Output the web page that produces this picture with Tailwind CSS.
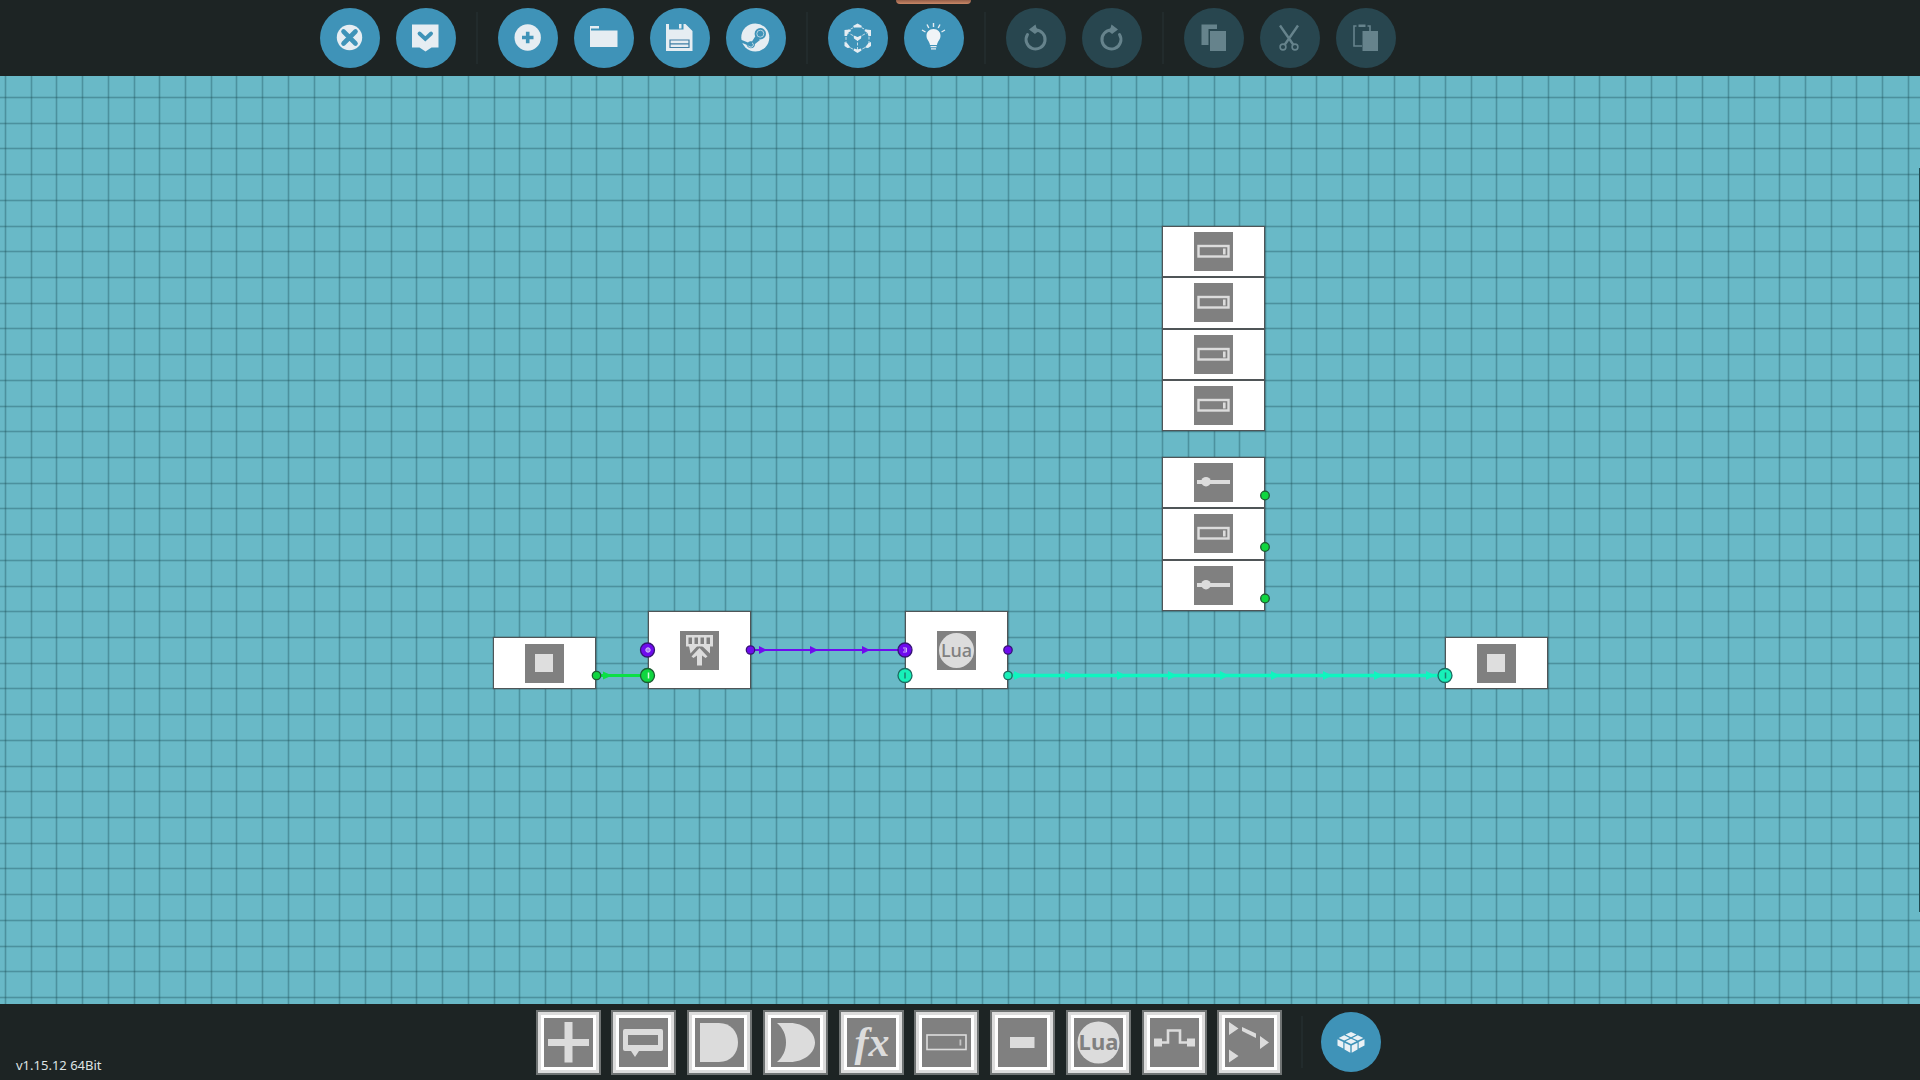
<!DOCTYPE html>
<html lang="en">
<head>
  <meta charset="UTF-8">
  <meta name="viewport" content="width=device-width, initial-scale=1.0">
  <title>Microcontroller Editor</title>
  <script src="https://cdn.jsdelivr.net/npm/@tailwindcss/browser@4"></script>
</head>
<body class="flex flex-col h-screen overflow-hidden bg-[#1d2424] font-['Noto_Sans','Open_Sans',sans-serif]">

  <!-- Shared node icons -->
  <svg class="hidden">
    <symbol id="icon-input" viewBox="0 0 39 39">
      <rect x="4.5" y="14" width="30" height="10.5" fill="none" stroke="#dcdcdc" stroke-width="2.4"/>
      <rect x="29" y="16.5" width="2.6" height="6" fill="#dcdcdc"/>
    </symbol>
    <symbol id="icon-slider" viewBox="0 0 39 39">
      <rect x="3" y="17" width="33" height="4" fill="#dcdcdc"/>
      <circle cx="12" cy="18.7" r="4.8" fill="#dcdcdc"/>
    </symbol>
    <symbol id="icon-square" viewBox="0 0 39 39">
      <rect x="10" y="10" width="18" height="18" fill="#dedede"/>
    </symbol>
  </svg>

  <!-- Top toolbar -->
  <header class="relative flex items-center h-[76px] shrink-0 pl-80">
    <div class="flex gap-4">
      <button aria-label="Close" class="size-[60px] rounded-full bg-[#3f93b8] hover:bg-[#4ba3c9]">
        <svg viewBox="0 0 60 60">
          <circle cx="29.5" cy="29.5" r="12.7" fill="#e6edf2"/>
          <path d="M23.5 23.5l12 12M35.5 23.5l-12 12" stroke="#3f93b8" stroke-width="4.6" stroke-linecap="round"/>
        </svg>
      </button>
      <button aria-label="Confirm" class="size-[60px] rounded-full bg-[#3f93b8] hover:bg-[#4ba3c9]">
        <svg viewBox="0 0 60 60">
          <path d="M16 16.5h26.5v23h-7l-6 4-6-4H16z" fill="#e6edf2"/>
          <path d="M23.5 25.5l5.800 5.5 5.800-5.5" fill="none" stroke="#3f93b8" stroke-width="3.8" stroke-linecap="round"/>
        </svg>
      </button>
    </div>
    <div class="w-0.5 h-13 mx-5 bg-[#222b2c]"></div>
    <div class="flex gap-4">
      <button aria-label="New" class="size-[60px] rounded-full bg-[#3f93b8] hover:bg-[#4ba3c9]">
        <svg viewBox="0 0 60 60">
          <circle cx="29.7" cy="29.5" r="13.2" fill="#e6edf2"/>
          <path d="M24 29.5h11.5M29.7 23.7v11.5" stroke="#3f93b8" stroke-width="3.6"/>
        </svg>
      </button>
      <button aria-label="Open" class="size-[60px] rounded-full bg-[#3f93b8] hover:bg-[#4ba3c9]">
        <svg viewBox="0 0 60 60">
          <path d="M16 18h9v2.500h-8V22.500h26.500V39H16z" fill="#e6edf2"/>
        </svg>
      </button>
      <button aria-label="Save" class="size-[60px] rounded-full bg-[#3f93b8] hover:bg-[#4ba3c9]">
        <svg viewBox="0 0 60 60">
          <path d="M16 16h3v5.500h14.500V16h2l7 7V43H16z" fill="#e6edf2"/>
          <path d="M29 16h2.500v4.500H29z" fill="#e6edf2"/>
          <path d="M20 32h19v7.500H20zM20.500 35.800h18" fill="none" stroke="#3f7fa5" stroke-width="1.2"/>
        </svg>
      </button>
      <button aria-label="Steam Workshop" class="size-[60px] rounded-full bg-[#3f93b8] hover:bg-[#4ba3c9]">
        <svg viewBox="0 0 60 60">
          <circle cx="29.3" cy="29.5" r="14" fill="#e6edf2"/>
          <path d="M14.500 31.500l7.500 3c1.800-1.300 3-1.300 4-1l3.500-5.500 4.500 4-5 4c0 3-2 4.300-4.300 4.200-2.400-.2-3.700-1.700-4.200-3.500L14 34z" fill="#3f93b8"/>
          <circle cx="34.3" cy="25.7" r="5.7" fill="#3f93b8"/>
          <circle cx="34.3" cy="25.7" r="3.5" fill="none" stroke="#b5d3e2" stroke-width="1"/>
          <path d="M22 37.5c1 1.700 3 2.200 4.500 1 1.300-1.200 1-3-.5-3.700" fill="none" stroke="#d5e5ee" stroke-width="1"/>
        </svg>
      </button>
    </div>
    <div class="w-0.5 h-13 mx-5 bg-[#222b2c]"></div>
    <div class="flex gap-4">
      <button aria-label="Toggle 3D view" class="size-[60px] rounded-full bg-[#3f93b8] hover:bg-[#4ba3c9]">
        <svg viewBox="0 0 60 60">
          <path d="M29.500 17.500L41 23.500v14l-11.500 6-11.500-6v-14zM18.500 24l11 6 11-6M29.500 30v13" fill="none" stroke="#e6edf2" stroke-width="0.8" stroke-dasharray="3 1.500"/>
          <g fill="#e6edf2">
            <path d="M29.500 15.500l4.500 2.500-1 1.500h-7l-1-1.500z"/>
            <path d="M25.500 27.500l4 1.500 4-1.500-.5 3-3.500 2.500-3.500-2.500z"/>
            <path d="M26 40.500l3.500 1 3.500-1 .5 2-4 2.500-4-2.500z"/>
            <path d="M16.500 28v-6l5.500-.5 1.200 1.500-3 1.500-1.200 3.500z"/>
            <path d="M43 28v-6l-5.500-.5-1.200 1.500 3 1.500 1.200 3.500z"/>
            <path d="M16.500 34l2.500 1 3.500 4.500-3 .5-3-2z"/>
            <path d="M43 34l-2.500 1-3.500 4.500 3 .5 3-2z"/>
          </g>
        </svg>
      </button>
      <button aria-label="Simulate logic" aria-pressed="true" class="relative size-[60px] rounded-full bg-[#3f93b8] hover:bg-[#4ba3c9]">
        <span class="absolute -top-2 -left-2 w-[75px] h-1 rounded-b-sm bg-linear-to-b from-[#96604a] to-[#c98867]"></span>
        <svg viewBox="0 0 60 60">
          <path d="M29.500 21c4.300 0 7 3 7 6.700 0 4-3.200 5.800-3.500 9.300h-7c-.3-3.500-3.500-5.300-3.500-9.300 0-3.700 2.700-6.700 7-6.700z" fill="#f0f4f7"/>
          <path d="M26.500 38.700h6M27 40.800h5" stroke="#e6edf2" stroke-width="1.300"/>
          <path d="M29.500 15v4M23 16.500l1.800 3.500M36 16.500l-1.800 3.500M18 22l3.500 2M41 22l-3.500 2" stroke="#e6edf2" stroke-width="1.400"/>
        </svg>
      </button>
    </div>
    <div class="w-0.5 h-13 mx-5 bg-[#222b2c]"></div>
    <div class="flex gap-4">
      <button aria-label="Undo" disabled class="size-[60px] rounded-full bg-[#28464f]">
        <svg viewBox="0 0 60 60">
          <path d="M21.500 26.500a9.500 9.500 0 1 0 8-4.500" fill="none" stroke="#66838c" stroke-width="3" stroke-linecap="round"/>
          <path d="M23 21.500l6.500-5 1 3.500 3 3-3.500 2-1 1z" fill="#66838c"/>
        </svg>
      </button>
      <button aria-label="Redo" disabled class="size-[60px] rounded-full bg-[#28464f]">
        <svg viewBox="0 0 60 60">
          <path d="M37.500 26.500a9.500 9.500 0 1 1-8-4.500" fill="none" stroke="#66838c" stroke-width="3" stroke-linecap="round"/>
          <path d="M36 21.500l-6.500-5-1 3.500-3 3 3.500 2 1 1z" fill="#66838c"/>
        </svg>
      </button>
    </div>
    <div class="w-0.5 h-13 mx-5 bg-[#222b2c]"></div>
    <div class="flex gap-4">
      <button aria-label="Copy" disabled class="size-[60px] rounded-full bg-[#28464f]">
        <svg viewBox="0 0 60 60" fill="#66838c">
          <path d="M17.500 16.500h15.500v4.500h-8.500v16h-7z"/>
          <path d="M26 23h16v20H26z"/>
        </svg>
      </button>
      <button aria-label="Cut" disabled class="size-[60px] rounded-full bg-[#28464f]">
        <svg viewBox="0 0 60 60" fill="none" stroke="#66838c">
          <path d="M20 17.500L33.500 37M38 17.500L24.500 37" stroke-width="2.400"/>
          <circle cx="23" cy="39" r="2.900" stroke-width="1.600"/>
          <circle cx="35" cy="39" r="2.900" stroke-width="1.600"/>
        </svg>
      </button>
      <button aria-label="Paste" disabled class="size-[60px] rounded-full bg-[#28464f]">
        <svg viewBox="0 0 60 60">
          <path d="M20.500 18H18v20h8M31.500 18H34v5" fill="none" stroke="#66838c" stroke-width="1.600"/>
          <path d="M22.500 16.500h7V19h-7z" fill="#66838c"/>
          <path d="M26.500 23h15.500v20H26.500z" fill="#66838c"/>
        </svg>
      </button>
    </div>
  </header>

  <!-- Logic canvas -->
  <main class="relative grow overflow-hidden bg-[#69b9c7]">
    <!-- 7 cells per 180px tile -->
    <svg class="absolute inset-0 size-full">
      <defs>
        <pattern id="grid" x="4" y="20" width="180" height="180" patternUnits="userSpaceOnUse">
          <g stroke="#17464f" stroke-opacity="0.11" stroke-width="3">
            <path d="M1.500 0v180M27.500 0v180M52.500 0v180M78.500 0v180M104.500 0v180M130.500 0v180M155.500 0v180"/>
            <path d="M0 1.500h180M0 27.500h180M0 52.500h180M0 78.500h180M0 104.500h180M0 130.500h180M0 155.500h180"/>
          </g>
          <g stroke="#17464f" stroke-opacity="0.27">
            <path d="M1.500 0v180M27.500 0v180M52.500 0v180M78.500 0v180M104.500 0v180M130.500 0v180M155.500 0v180"/>
            <path d="M0 1.500h180M0 27.500h180M0 52.500h180M0 78.500h180M0 104.500h180M0 130.500h180M0 155.500h180"/>
          </g>
        </pattern>
      </defs>
      <rect width="100%" height="100%" fill="url(#grid)"/>
    </svg>

    <!-- Nodes -->
    <div class="absolute left-[493px] top-[561px] w-[103px] h-[52px] flex items-center justify-center bg-white border border-[#4f5557] shadow-[0_0_1px_#444]">
      <svg class="size-[39px] bg-[#808080]"><use href="#icon-square"/></svg>
    </div>
    <div class="absolute left-[648px] top-[535px] w-[103px] h-[78px] flex items-center justify-center bg-white border border-[#4f5557] shadow-[0_0_1px_#444]">
      <svg class="size-[39px] bg-[#808080]" viewBox="0 0 39 39" fill="#dcdcdc">
        <path fill-rule="evenodd" d="M6 4h27v11.500H6zM8.500 6.500v6.500h3.500V6.500zM14.500 6.500v6.500h3.500V6.500zM20.500 6.500v6.500h3.500V6.500zM26.500 6.500v6.500h3.500V6.500z"/>
        <path d="M9 15h21v7.500L19.500 12.500 10.500 22.500z"/>
        <path d="M19.500 15.500l9 9.500h-18z" fill="#808080"/>
        <path d="M19.500 17l8 8.500-2 1.500-3.500-2.500v10h-5V24.500l-3.500 2.500-2-1.500z"/>
      </svg>
    </div>
    <div class="absolute left-[905px] top-[535px] w-[103px] h-[78px] flex items-center justify-center bg-white border border-[#4f5557] shadow-[0_0_1px_#444]">
      <svg class="size-[39px] bg-[#808080]" viewBox="0 0 39 39">
        <circle cx="19.500" cy="19.500" r="17.500" fill="#dcdcdc"/>
        <text x="19.500" y="26" text-anchor="middle" font-size="18" font-weight="500" fill="#808080">Lua</text>
      </svg>
    </div>
    <div class="absolute left-[1445px] top-[561px] w-[103px] h-[52px] flex items-center justify-center bg-white border border-[#4f5557] shadow-[0_0_1px_#444]">
      <svg class="size-[39px] bg-[#808080]"><use href="#icon-square"/></svg>
    </div>

    <div class="absolute left-[1162px] top-[150px] w-[103px] h-[205px] flex flex-col shadow-[0_0_1px_#444]">
      <div class="flex-1 flex items-center justify-center bg-white border border-[#4f5557]">
        <svg class="size-[39px] bg-[#808080]"><use href="#icon-input"/></svg>
      </div>
      <div class="flex-1 flex items-center justify-center bg-white border border-[#4f5557]">
        <svg class="size-[39px] bg-[#808080]"><use href="#icon-input"/></svg>
      </div>
      <div class="flex-1 flex items-center justify-center bg-white border border-[#4f5557]">
        <svg class="size-[39px] bg-[#808080]"><use href="#icon-input"/></svg>
      </div>
      <div class="flex-1 flex items-center justify-center bg-white border border-[#4f5557]">
        <svg class="size-[39px] bg-[#808080]"><use href="#icon-input"/></svg>
      </div>
    </div>

    <div class="absolute left-[1162px] top-[381px] w-[103px] h-[154px] flex flex-col shadow-[0_0_1px_#444]">
      <div class="flex-1 flex items-center justify-center bg-white border border-[#4f5557]">
        <svg class="size-[39px] bg-[#808080]"><use href="#icon-slider"/></svg>
      </div>
      <div class="flex-1 flex items-center justify-center bg-white border border-[#4f5557]">
        <svg class="size-[39px] bg-[#808080]"><use href="#icon-input"/></svg>
      </div>
      <div class="flex-1 flex items-center justify-center bg-white border border-[#4f5557]">
        <svg class="size-[39px] bg-[#808080]"><use href="#icon-slider"/></svg>
      </div>
    </div>

    <!-- Wires and ports -->
    <svg class="absolute inset-0 size-full pointer-events-none">
      <path d="M597 599.500H648" stroke="#0be045" stroke-width="3"/>
      <path d="M603 595.500l9 4-9 4z" fill="#0be045"/>
      <path d="M751 574H905" stroke="#6f0bee" stroke-width="2"/>
      <path d="M759 570l8 4-8 4zM810 570l8 4-8 4zM862 570l8 4-8 4z" fill="#6f0bee"/>
      <path d="M1008 599.500H1445" stroke="#0ff5bf" stroke-width="3.600"/>
      <path d="M1014 595l9 4.500-9 4.500zM1065 595l9 4.500-9 4.500zM1117 595l9 4.500-9 4.500zM1168 595l9 4.500-9 4.500zM1220 595l9 4.500-9 4.500zM1271 595l9 4.500-9 4.500zM1323 595l9 4.500-9 4.500zM1374 595l9 4.500-9 4.500zM1426 595l9 4.500-9 4.500z" fill="#0ff5bf"/>

      <g fill="#0fd640" stroke="#1c5c31" stroke-width="1.300">
        <circle cx="596.500" cy="599.500" r="4.200"/>
        <circle cx="647.500" cy="599.500" r="7"/>
        <circle cx="1265" cy="419.500" r="4.300"/>
        <circle cx="1265" cy="471" r="4.300"/>
        <circle cx="1265" cy="522.500" r="4.300"/>
      </g>
      <g fill="#6f0bee" stroke="#351575" stroke-width="1.300">
        <circle cx="647.500" cy="574" r="7"/>
        <circle cx="750.500" cy="574" r="4.200"/>
        <circle cx="905" cy="574" r="7"/>
        <circle cx="1008" cy="574" r="4.200"/>
      </g>
      <g fill="#17f0b8" stroke="#1c6b60" stroke-width="1.300">
        <circle cx="905" cy="599.500" r="7"/>
        <circle cx="1008" cy="599.500" r="4.200"/>
        <circle cx="1445" cy="599.500" r="7"/>
      </g>
      <circle cx="648" cy="574" r="2.200" fill="#a57af2" stroke="#d5c4fa"/>
      <path d="M648.500 596.500v6" stroke="#d5fbdf" stroke-width="1.500"/>
      <path d="M903 572h3.500v4H903M904 574h2.500" fill="none" stroke="#cdb5f8"/>
      <path d="M905 596.500v6M1445.500 596.500v6" stroke="#1c8070" stroke-width="1.500"/>
    </svg>

    <!-- Side panel edge -->
    <div class="absolute right-0 top-[92px] bottom-[92px] w-px bg-[#1f4a50]"></div>
  </main>

  <!-- Component bar -->
  <footer class="relative flex items-center justify-center h-[76px] shrink-0 pr-1">
    <p class="absolute left-4 bottom-[7px] text-[13px] leading-4 text-[#dfe3e3]">v1.15.12 64Bit</p>

    <div class="flex justify-between w-[747px]">
      <button aria-label="All components" class="p-1.5 bg-white border-2 border-[#6f7373] ring-3 ring-[#dcdcdc] ring-inset">
        <svg class="size-[49px] bg-[#808080]" viewBox="0 0 49 49">
          <path d="M20.500 4h8v17h16.500v7H28.500v16.500h-8V28H4V21h16.500z" fill="#dcdcdc"/>
        </svg>
      </button>
      <button aria-label="Comment" class="p-1.5 bg-white border-2 border-[#6f7373] ring-3 ring-[#dcdcdc] ring-inset">
        <svg class="size-[49px] bg-[#808080]" viewBox="0 0 49 49">
          <path fill-rule="evenodd" d="M6 11h36a2 2 0 0 1 2 2v18a2 2 0 0 1-2 2H20l-4 6-4-6H6a2 2 0 0 1-2-2V13a2 2 0 0 1 2-2zM9 17v10h30V17z" fill="#dcdcdc"/>
        </svg>
      </button>
      <button aria-label="AND gate" class="p-1.5 bg-white border-2 border-[#6f7373] ring-3 ring-[#dcdcdc] ring-inset">
        <svg class="size-[49px] bg-[#808080]" viewBox="0 0 49 49">
          <path d="M5 5h19c12 0 19 9 19 19.500S36 44 24 44H5z" fill="#dcdcdc"/>
        </svg>
      </button>
      <button aria-label="OR gate" class="p-1.5 bg-white border-2 border-[#6f7373] ring-3 ring-[#dcdcdc] ring-inset">
        <svg class="size-[49px] bg-[#808080]" viewBox="0 0 49 49">
          <path d="M6 5h13c14 0 25 9 25 19.500S33 44 19 44H6c6-5 9-12 9-19.500S12 10 6 5z" fill="#dcdcdc"/>
        </svg>
      </button>
      <button aria-label="Function" class="p-1.5 bg-white border-2 border-[#6f7373] ring-3 ring-[#dcdcdc] ring-inset">
        <svg class="size-[49px] bg-[#808080]" viewBox="0 0 49 49">
          <text x="25" y="38" text-anchor="middle" class="font-['Liberation_Serif',serif]" font-size="42" font-style="italic" font-weight="700" fill="#dcdcdc">fx</text>
        </svg>
      </button>
      <button aria-label="Property input" class="p-1.5 bg-white border-2 border-[#6f7373] ring-3 ring-[#dcdcdc] ring-inset">
        <svg class="size-[49px] bg-[#808080]" viewBox="0 0 49 49">
          <rect x="5" y="17" width="39" height="14.500" fill="none" stroke="#dcdcdc" stroke-width="1.600"/>
          <rect x="37.500" y="21.500" width="1.800" height="6" fill="#c4c4c4"/>
        </svg>
      </button>
      <button aria-label="Constant" class="p-1.5 bg-white border-2 border-[#6f7373] ring-3 ring-[#dcdcdc] ring-inset">
        <svg class="size-[49px] bg-[#808080]" viewBox="0 0 49 49">
          <rect x="12" y="19" width="24.500" height="11" fill="#dcdcdc"/>
        </svg>
      </button>
      <button aria-label="Lua script" class="p-1.5 bg-white border-2 border-[#6f7373] ring-3 ring-[#dcdcdc] ring-inset">
        <svg class="size-[49px] bg-[#808080]" viewBox="0 0 49 49">
          <circle cx="24.500" cy="24.500" r="21" fill="#dcdcdc"/>
          <text x="24.500" y="32" text-anchor="middle" font-size="22" font-weight="700" fill="#808080">Lua</text>
        </svg>
      </button>
      <button aria-label="Pulse" class="p-1.5 bg-white border-2 border-[#6f7373] ring-3 ring-[#dcdcdc] ring-inset">
        <svg class="size-[49px] bg-[#808080]" viewBox="0 0 49 49">
          <path d="M8 24.500h10V12.500h12v12h10" fill="none" stroke="#dcdcdc" stroke-width="2.600"/>
          <path d="M4 20.500h8v8H4zM37 20.500h8v8h-8z" fill="#dcdcdc"/>
        </svg>
      </button>
      <button aria-label="Numerical switchbox" class="p-1.5 bg-white border-2 border-[#6f7373] ring-3 ring-[#dcdcdc] ring-inset">
        <svg class="size-[49px] bg-[#808080]" viewBox="0 0 49 49">
          <path d="M4 4l9.500 6.500L4 17zM4 31.500l9.500 6.500L4 44.500zM35 18l9 6.500L35 31zM17 9l14 6.500V20L17 13z" fill="#dcdcdc"/>
        </svg>
      </button>
    </div>

    <div class="w-0.5 h-13 mx-[18px] bg-[#222b2c]"></div>

    <button aria-label="Component inventory" class="size-[60px] rounded-full bg-[#3f93b8] hover:bg-[#4ba3c9]">
      <!-- 2x2 block of bricks, isometric -->
      <svg viewBox="0 0 60 60" fill="#eaf1f5">
        <path d="M30 20l5.500 2.600L30 25.200l-5.500-2.600zM23.200 23.300l5.500 2.600-5.500 2.600-5.500-2.600zM36.800 23.300l5.500 2.600-5.500 2.600-5.500-2.600zM30 26.700l5.500 2.600-5.500 2.600-5.500-2.600z"/>
        <path d="M16.500 27.300l5.800 2.800v6.400l-5.800-3zM23.500 30.700l5.800 2.800v7.200l-5.800-3.200zM30.700 33.500l5.800-2.800v6.800l-5.800 3.200zM37.700 30.100l5.800-2.800v6.200l-5.800 3z"/>
      </svg>
    </button>
  </footer>
</body>
</html>
